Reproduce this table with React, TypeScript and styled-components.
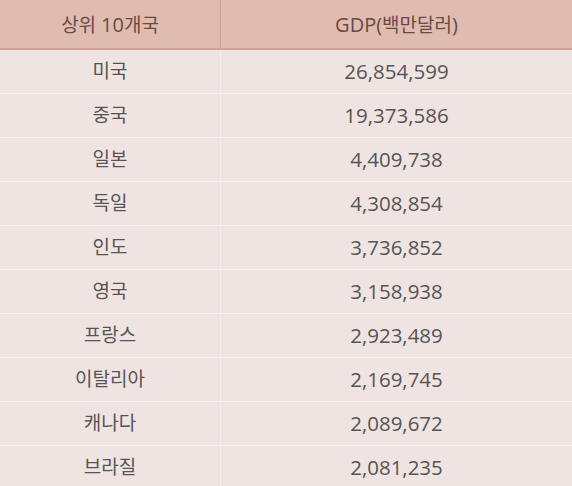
import styled, { createGlobalStyle } from 'styled-components'

const GlobalStyle = createGlobalStyle`
  html, body {
    margin: 0;
    padding: 0;
    background: #ffffff;
  }
  body {
    font-family: "Open Sans", "Noto Sans CJK KR", sans-serif;
  }
`

const rows: [string, string][] = [
  ['미국', '26,854,599'],
  ['중국', '19,373,586'],
  ['일본', '4,409,738'],
  ['독일', '4,308,854'],
  ['인도', '3,736,852'],
  ['영국', '3,158,938'],
  ['프랑스', '2,923,489'],
  ['이탈리아', '2,169,745'],
  ['캐나다', '2,089,672'],
  ['브라질', '2,081,235'],
]

export default function App() {
  return (
    <>
      <GlobalStyle />
      <Table>
        <thead>
          <tr>
            <HeadCell>
              상위 <Latin>10</Latin>개국
            </HeadCell>
            <HeadCell>
              <Latin>GDP(</Latin>백만달러<Latin>)</Latin>
            </HeadCell>
          </tr>
        </thead>
        <tbody>
          {rows.map(([country, gdp]) => (
            <Row key={country}>
              <Cell>{country}</Cell>
              <Cell $numeric>{gdp}</Cell>
            </Row>
          ))}
        </tbody>
      </Table>
    </>
  )
}

const Table = styled.table`
  width: 572px;
  border-collapse: collapse;
  table-layout: fixed;
`

const HeadCell = styled.th`
  height: 48px;
  padding: 0;
  background-color: #e0bbb0;
  border-bottom: 2px solid #cfa398;
  color: #6b4a42;
  font-size: 19px;
  font-weight: normal;
  text-align: center;
  vertical-align: middle;

  &:first-child {
    width: 220px;
    border-right: 1px solid #cca195;
  }
`

const Latin = styled.span`
  font-size: 20px;
`

const Row = styled.tr`
  background-color: #efe4e2;
  border-bottom: 1px solid #f8f1f0;
`

const Cell = styled.td<{ $numeric?: boolean }>`
  height: 43px;
  padding: 0;
  color: #555555;
  font-size: ${(p) => (p.$numeric ? '20.5px' : '19px')};
  line-height: 1.2;
  text-align: center;
  vertical-align: middle;

  &:first-child {
    border-right: 1px solid #f6eeec;
  }
`
